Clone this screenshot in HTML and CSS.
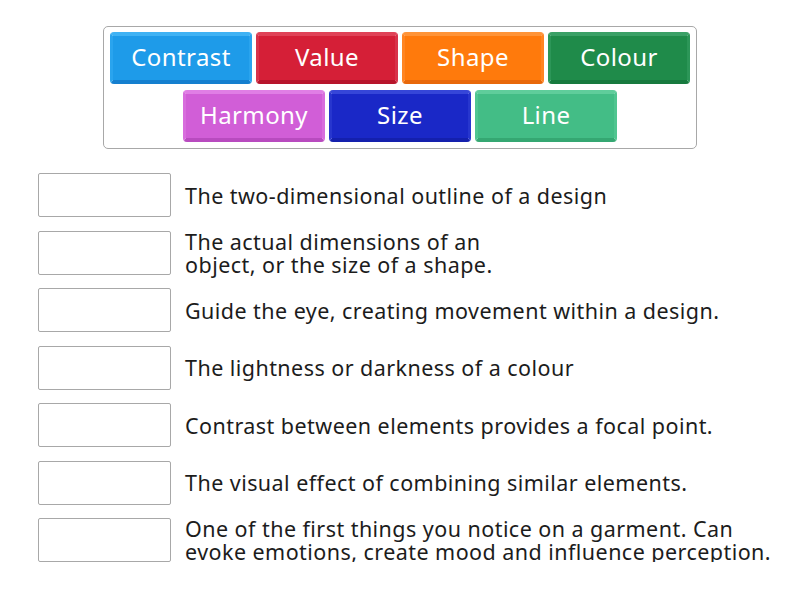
FILE: index.html
```html
<!DOCTYPE html>
<html>
<head>
<meta charset="utf-8">
<link rel="stylesheet" href="styles.css">
</head>
<body>
<div class="page">
  <div class="bank">
    <div class="tile t-blue">Contrast</div>
    <div class="tile t-red">Value</div>
    <div class="tile t-orange">Shape</div>
    <div class="tile t-green">Colour</div>
    <div class="tile t-purple">Harmony</div>
    <div class="tile t-navy">Size</div>
    <div class="tile t-mint">Line</div>
  </div>
  <div class="rows">
    <div class="row"><div class="slot"></div><div class="def">The two-dimensional outline of a design</div></div>
    <div class="row"><div class="slot"></div><div class="def">The actual dimensions of an<br>object, or the size of a shape.</div></div>
    <div class="row"><div class="slot"></div><div class="def">Guide the eye, creating movement within a design.</div></div>
    <div class="row"><div class="slot"></div><div class="def">The lightness or darkness of a colour</div></div>
    <div class="row"><div class="slot"></div><div class="def">Contrast between elements provides a focal point.</div></div>
    <div class="row"><div class="slot"></div><div class="def">The visual effect of combining similar elements.</div></div>
    <div class="row"><div class="slot"></div><div class="def">One of the first things you notice on a garment. Can<br>evoke emotions, create mood and influence perception.</div></div>
  </div>
</div>
</body>
</html>
```
FILE: styles.css
```css
* { box-sizing: border-box; }
html, body { margin: 0; padding: 0; background: #fff; }
body { font-family: "Noto Sans", "Open Sans", sans-serif; color: #1a1a1a; }
.page { width: 800px; padding-top: 26px; }
.bank {
  width: 594px;
  margin-left: 103px;
  border: 1px solid #a8a8a8;
  border-radius: 5px;
  padding: 5px 6px 6px 6px;
  display: flex;
  flex-wrap: wrap;
  justify-content: center;
  gap: 6px 4px;
}
.tile {
  width: 142px;
  height: 52px;
  border-radius: 4px;
  color: #fff;
  font-size: 24px;
  letter-spacing: 0.4px;
  display: flex;
  align-items: center;
  justify-content: center;
  padding-bottom: 3px;
  border-style: solid;
  border-width: 4px 3px 4px 3px;
  background-clip: padding-box;
}
.t-blue { background-color: #1e9be9; border-color: #3fb2f4 #2aa4ee #157fcf; }
.t-red { background-color: #d51f37; border-color: #e04257 #d8324a #b7152b; }
.t-orange { background-color: #ff7a0c; border-color: #ff9438 #ff8522 #e8680a; }
.t-green { background-color: #1f8b4a; border-color: #3aa066 #2c9658 #177a3e; }
.t-purple { background-color: #d15ed7; border-color: #e07ee5 #d86ddd #b84bbf; }
.t-navy { background-color: #1a28c7; border-color: #3646d8 #2736ce #1420ad; }
.t-mint { background-color: #43bd86; border-color: #5fcd9b #50c590 #35a772; }
.rows {
  margin-top: 24px;
  padding-left: 38px;
  display: flex;
  flex-direction: column;
  gap: 13.5px;
}
.row { display: flex; align-items: center; height: 44px; }
.slot {
  width: 133px;
  height: 44px;
  border: 1px solid #a8a8a8;
  border-radius: 2px;
  flex: none;
}
.def {
  margin-left: 14px;
  font-size: 21.5px;
  letter-spacing: 0.45px;
  line-height: 23px;
  color: #1c1c1c;
  white-space: nowrap;
}
```
